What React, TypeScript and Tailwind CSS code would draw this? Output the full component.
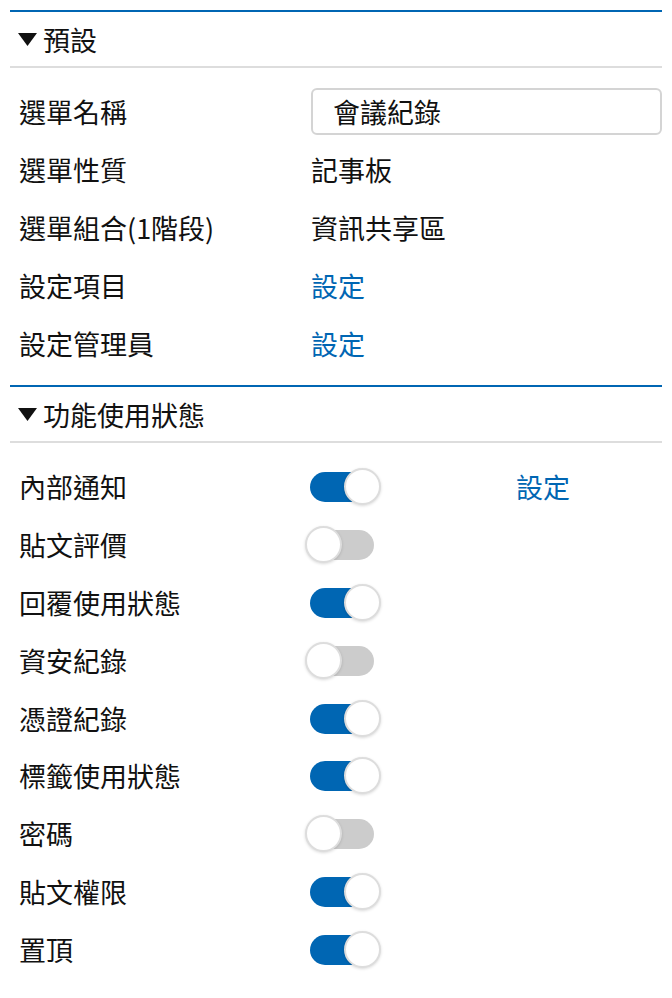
import React from "react";

const font = { fontFamily: '"Noto Sans CJK TC", "Noto Sans", sans-serif' };

function Tri() {
  return (
    <svg width="19" height="13" viewBox="0 0 19 13" className="mr-[6px] shrink-0">
      <polygon points="0,0 19,0 9.5,13" fill="#111" />
    </svg>
  );
}

function Header({ title }: { title: string }) {
  return (
    <div className="border-t-2 border-b-2 border-t-[#0066b3] border-b-[#dddddd] h-[58px] flex items-center pl-[8px]">
      <Tri />
      <span className="text-[27px] leading-none text-[#111]">{title}</span>
    </div>
  );
}

function Toggle({ on }: { on: boolean }) {
  return (
    <div className="relative w-[77px] h-[37px] shrink-0">
      <div
        className={
          "absolute left-[5px] top-[4px] w-[64px] h-[30px] rounded-full " +
          (on ? "bg-[#0066b3]" : "bg-[#cccccc]")
        }
      />
      <div
        className={
          "absolute top-0 w-[37px] h-[37px] rounded-full bg-white border-2 border-[#dddddd] shadow-[0_1px_3px_rgba(0,0,0,0.15)] " +
          (on ? "left-[39px]" : "left-0")
        }
      />
    </div>
  );
}

function InfoRow({ label, children }: { label: string; children: React.ReactNode }) {
  return (
    <div className="h-[58px] flex items-center pl-[9px]">
      <div className="w-[292px] shrink-0 text-[27px] leading-none text-[#111]">{label}</div>
      <div className="flex-1 flex items-center">{children}</div>
    </div>
  );
}

function ToggleRow({ label, on, link }: { label: string; on: boolean; link?: boolean }) {
  return (
    <div className="h-[57.8px] flex items-center pl-[9px]">
      <div className="w-[286px] shrink-0 text-[27px] leading-none text-[#111]">{label}</div>
      <Toggle on={on} />
      {link && <span className="ml-[134px] text-[27px] leading-none text-[#0066b3]">設定</span>}
    </div>
  );
}

export default function App() {
  const toggles: [string, boolean, boolean?][] = [
    ["內部通知", true, true],
    ["貼文評價", false],
    ["回覆使用狀態", true],
    ["資安紀錄", false],
    ["憑證紀錄", true],
    ["標籤使用狀態", true],
    ["密碼", false],
    ["貼文權限", true],
    ["置頂", true],
  ];
  return (
    <div style={font} className="bg-white w-[672px] min-h-[998px] pt-[10px] px-[10px]">
      <Header title="預設" />
      <div className="pt-[14px] pb-[13px]">
        <InfoRow label="選單名稱">
          <div className="w-full h-[47px] border-2 border-[#d4d4d4] rounded-[6px] flex items-center pl-[20px] text-[27px] leading-none text-[#111]">
            會議紀錄
          </div>
        </InfoRow>
        <InfoRow label="選單性質">
          <span className="text-[27px] leading-none text-[#111]">記事板</span>
        </InfoRow>
        <InfoRow label="選單組合(1階段)">
          <span className="text-[27px] leading-none text-[#111]">資訊共享區</span>
        </InfoRow>
        <InfoRow label="設定項目">
          <span className="text-[27px] leading-none text-[#0066b3]">設定</span>
        </InfoRow>
        <InfoRow label="設定管理員">
          <span className="text-[27px] leading-none text-[#0066b3]">設定</span>
        </InfoRow>
      </div>
      <Header title="功能使用狀態" />
      <div className="pt-[15px]">
        {toggles.map(([l, on, link]) => (
          <ToggleRow key={l} label={l} on={on} link={link} />
        ))}
      </div>
    </div>
  );
}
